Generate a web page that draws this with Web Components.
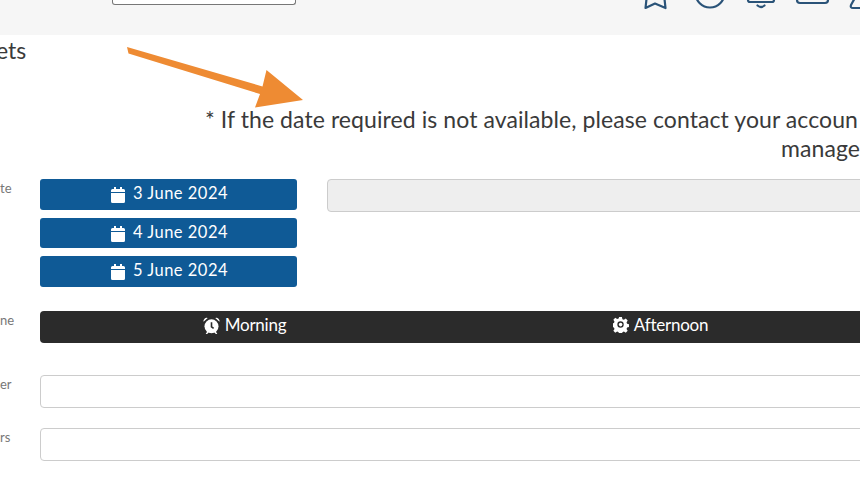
<!DOCTYPE html>
<html>
<head>
<meta charset="utf-8">
<title>Tickets</title>
<style>
  html, body { margin: 0; padding: 0; height: 480px; overflow: hidden; background: #fff; }
  body { font-family: "Lato", "Liberation Sans", sans-serif; color: #333; }
</style>
</head>
<body>
<template id="icons">
  <svg data-name="calendar" width="14" height="16" viewBox="0 0 14 16"><path fill="#fff" d="M3 0h2v2h4V0h2v2h1.500A1.500 1.500 0 0 1 14 3.500V5H0V3.500A1.500 1.500 0 0 1 1.500 2H3zM0 6h14v8.500a1.500 1.500 0 0 1-1.500 1.500h-11A1.500 1.500 0 0 1 0 14.500z"/></svg>
  <svg data-name="alarm" width="17" height="17" viewBox="0 0 16 16"><path fill="#fff" d="M0.500 4.500a3 3 0 0 1 4-3.500zM15.500 4.500a3 3 0 0 0-4-3.500z"/><circle cx="8" cy="8.800" r="6.600" fill="#fff"/><path fill="#fff" d="M2.500 16l2-3 1 1-1.500 2zM13.500 16l-2-3-1 1 1.500 2z"/><path fill="none" stroke="#2b2b2b" stroke-width="1.500" d="M8 5v4.200l2 1.600"/></svg>
  <svg data-name="cog" width="16" height="16" viewBox="0 0 16 16"><path fill="#fff" fill-rule="evenodd" d="M6.500 0h3l.5 2.300 1.600.7 2-1.300 2 2.100-1.200 2 .6 1.500 2 .5v2.800l-2 .6-.6 1.500 1.200 2-2 2-2-1.200-1.600.7-.5 2h-3l-.5-2-1.600-.7-2 1.200-2-2 1.200-2-.6-1.500-2-.6V7l2-.6.6-1.400-1.200-2 2-2.100 2 1.300 1.600-.7zM8 4.600a3.400 3.400 0 1 0 0 6.800 3.400 3.400 0 0 0 0-6.800z" transform="scale(.94)"/><circle cx="7.600" cy="7.600" r="1.800" fill="#fff"/></svg>
</template>

<page-header></page-header>
<page-notice></page-notice>
<form-row label="te" style="--row-h: 132px;">
  <div style="display:flex; gap:30px; align-items:flex-start;">
    <date-list>
      <date-button>3 June 2024</date-button>
      <date-button>4 June 2024</date-button>
      <date-button>5 June 2024</date-button>
    </date-list>
    <text-field disabled style="flex:1;"></text-field>
  </div>
</form-row>
<form-row label="ne" style="--row-h: 64px;"><time-toggle></time-toggle></form-row>
<form-row label="er" style="--row-h: 53px;"><text-field></text-field></form-row>
<form-row label="rs" style="--row-h: 33px;"><text-field></text-field></form-row>

<script>
function icon(name) {
  return document.getElementById("icons").content.querySelector(`[data-name="${name}"]`).outerHTML;
}

class PageHeader extends HTMLElement {
  constructor() {
    super();
    this.attachShadow({ mode: "open" });
  }
  connectedCallback() {
    this.shadowRoot.innerHTML = `
      <style>
        :host { display: flex; height: 35px; background: #f6f6f6; width: 860px; overflow: hidden; }
        .search { flex: none; margin-left: 112px; width: 182px; height: 4px; background: #fff; border: 1px solid #777; border-top: 0; border-radius: 0 0 3px 3px; }
        svg { display: block; margin-left: 346px; flex: none; }
      </style>
      <div class="search"></div>
      <svg width="218" height="12" viewBox="0 0 218 12" fill="none" stroke="#2a5378" stroke-width="2.200" stroke-linejoin="round" stroke-linecap="round">
        <!-- x offset: 642 in page -->
        <path d="M4.500 -1L3.500 8 13 3.500 23.500 8 22.500 -1"/>
        <circle cx="68" cy="-7" r="14.500"/>
        <path d="M106 -3v3a2 2 0 0 0 2 2h22a2 2 0 0 0 2-2v-3"/>
        <path d="M115.500 5.500q3.500 3 7 0"/>
        <path d="M155 -3v3a3 3 0 0 0 3 3h25a3 3 0 0 0 3-3v-3"/>
        <path d="M214 -4L209 5q-1 3 2 3h9"/>
      </svg>
    `;
  }
}

class PageNotice extends HTMLElement {
  constructor() {
    super();
    this.attachShadow({ mode: "open" });
  }
  connectedCallback() {
    this.shadowRoot.innerHTML = `
      <style>
        :host { display: block; position: relative; height: 144px; width: 860px; overflow: hidden; font-size: 23px; line-height: 29px; color: #3a3a3a; }
        .title { margin: 1px 0 0 -4px; font-size: 23px; line-height: 28px; }
        .note { padding: 41px 0 0 205px; white-space: nowrap; letter-spacing: .08px; }
        .note span { display: block; }
        .note span + span { padding-left: 576px; }
        svg { position: absolute; left: 0; top: 0; }
      </style>
      <div class="title">ets</div>
      <div class="note">
        <span>* If the date required is not available, please contact your accoun</span>
        <span>manage</span>
      </div>
      <svg width="320" height="80" viewBox="0 35 320 80">
        <path fill="#ee8b33" d="M127 47l1.500 6.500 131.500 40.500-5 13.500 48-7.500-36.500-30-4 16.500z"/>
      </svg>
    `;
  }
}

class FormRow extends HTMLElement {
  constructor() {
    super();
    this.attachShadow({ mode: "open" });
  }
  connectedCallback() {
    this.shadowRoot.innerHTML = `
      <style>
        :host { display: grid; grid-template-columns: 9px 880px; column-gap: 31px; height: var(--row-h); }
        .label { font-size: 13px; line-height: 18px; color: #777; text-align: right; }
      </style>
      <div class="label">${this.getAttribute("label") || ""}</div>
      <div><slot></slot></div>
    `;
  }
}

class DateList extends HTMLElement {
  constructor() {
    super();
    this.attachShadow({ mode: "open" });
  }
  connectedCallback() {
    this.shadowRoot.innerHTML = `
      <style>
        :host { display: flex; flex-direction: column; gap: 8px; width: 257px; flex: none; }
      </style>
      <slot></slot>
    `;
  }
}

class DateButton extends HTMLElement {
  constructor() {
    super();
    this.attachShadow({ mode: "open" });
  }
  connectedCallback() {
    this.shadowRoot.innerHTML = `
      <style>
        :host { display: flex; align-items: center; justify-content: center; gap: 8px; height: 30.500px; padding-left: 2px; box-sizing: border-box; background: #0f5a96; color: #fff; border-radius: 3px; font-size: 16.500px; letter-spacing: .5px; }
        svg { display: block; margin-top: 2px; }
        span { margin-top: -2px; }
      </style>
      ${icon("calendar")}<span><slot></slot></span>
    `;
  }
}

class TimeToggle extends HTMLElement {
  constructor() {
    super();
    this.attachShadow({ mode: "open" });
  }
  connectedCallback() {
    this.shadowRoot.innerHTML = `
      <style>
        :host { display: grid; grid-template-columns: 409px 423px; width: 832px; height: 32px; background: #2b2b2b; color: #fff; border-radius: 4px; font-size: 17px; letter-spacing: -.25px; }
        div { display: flex; align-items: center; justify-content: center; gap: 5px; }
        svg { margin-top: -4px; }
        span { margin-top: -6px; }
      </style>
      <div>${icon("alarm")}<span>Morning</span></div>
      <div>${icon("cog")}<span>Afternoon</span></div>
    `;
  }
}

class TextField extends HTMLElement {
  constructor() {
    super();
    this.attachShadow({ mode: "open" });
  }
  connectedCallback() {
    const off = this.hasAttribute("disabled");
    this.shadowRoot.innerHTML = `
      <style>
        :host { display: block; height: 33px; box-sizing: border-box; border: 1px solid #ccc; border-radius: 4px; background: ${off ? "#eee" : "#fff"}; }
      </style>
    `;
  }
}

customElements.define("page-header", PageHeader);
customElements.define("page-notice", PageNotice);
customElements.define("form-row", FormRow);
customElements.define("date-list", DateList);
customElements.define("date-button", DateButton);
customElements.define("time-toggle", TimeToggle);
customElements.define("text-field", TextField);
</script>
</body>
</html>
